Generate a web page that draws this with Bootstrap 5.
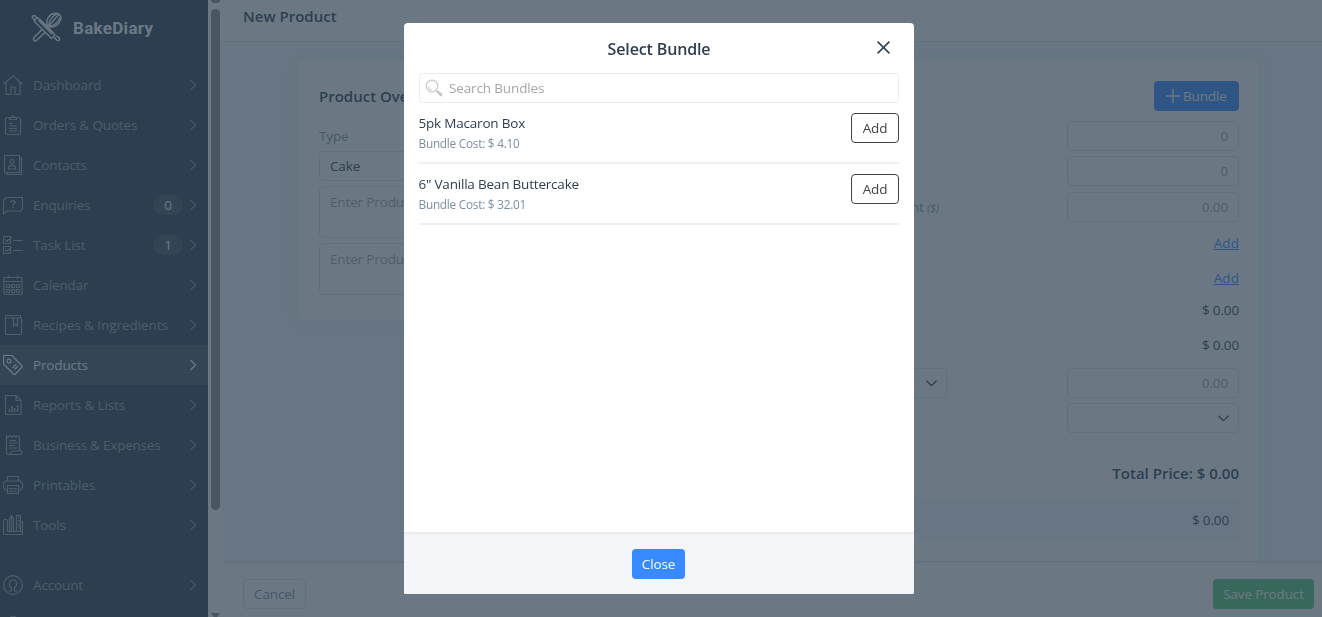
<!DOCTYPE html>
<html lang="en">
<head>
<meta charset="utf-8">
<meta name="viewport" content="width=device-width, initial-scale=1">
<title>BakeDiary – New Product</title>
<link href="https://cdn.jsdelivr.net/npm/bootstrap@5.3.0/dist/css/bootstrap.min.css" rel="stylesheet">
<style>
html,body{height:100%;overflow:hidden}
body{font-family:"Open Sans","Noto Sans",sans-serif;font-size:13.5px;letter-spacing:-.14px;line-height:20px;color:#2c3e50;background:#fff}
svg{fill:none;stroke:currentColor;display:block;flex:none}
.side{width:208px;background:#2c3e50;color:#98a3aa}
.side-link svg:first-child{stroke-width:1.2}
.brand-row{height:65px;padding:12px 0 0 31px;color:#fff;flex:none}
.brand-row span{font:700 17px/32px Roboto,sans-serif;letter-spacing:.3px;margin-left:11px}
.side-link{height:40px;padding:0 11px 0 3px;flex:none}
.side-link>span:nth-child(2){margin-left:10px}
.side-link.on{background:#475764;color:#fff}
.side-link .chev{color:#b8c0c6;margin-left:auto}
.side-link.on .chev{color:#fff}
.count{width:30px;height:20px;border-radius:10px;background:#435463;color:#fff;text-align:center;margin-left:auto}
.count + .chev{margin-left:6px!important}
.track{width:15px;padding:0 3px}
.track i{display:block;width:9px;background:#8e8b8b;flex:none}
.main-area{background:#f5f9fc}
.topbar{height:42px;padding:6px 0 0 20px;background:#fff;border-bottom:1px solid #dde3e8;flex:none}
.strong-t{font-weight:600;font-size:15px;letter-spacing:0}
.canvas{width:960px;margin:19px 0 0 76px;gap:20px}
.panel{background:#fff;border-radius:4px;padding:20px;box-shadow:0 0 22px 12px rgba(44,90,120,.03);flex:1 1 0}
.field{height:30px;border:1px solid #e0e1e3;border-radius:4px;padding:4px 10px;background:#fff}
.field.tall{height:52px;padding-top:5px}
.short{width:172px}
.ph{color:#a6a6a6}
.muted-t{color:#8696a3}
.line{height:30px;display:flex;justify-content:flex-end;align-items:center}
.blue{background:#388aff;color:#fff;border-radius:4px;height:30px}
.line a{color:#388aff;letter-spacing:.1px}
.sumbox{background:#f5f9fc;height:44px;border-radius:4px;padding:12px 10px;text-align:right}
.bottombar{height:56px;background:#fff;border-top:2px solid #dfe5ea;padding:16px 8px 0 20px;flex:none}
.cancel-b{height:30px;width:63px;border:1px solid #dfe1e3;border-radius:4px;text-align:center;line-height:28px;color:#7e92a4}
.save-b{height:30px;width:101px;border-radius:4px;background:#54c778;color:#fff;text-align:center;line-height:30px}
.modal-backdrop.show{background:#2c3e50;opacity:.7}
.modal{overflow:hidden}
.modal-dialog{width:510px;max-width:none;margin:22.5px 0 0 404px}
.modal-content{height:571.5px;border:0;border-radius:4px 4px 2px 2px;overflow:hidden}
.modal-header{height:50px;padding:3px 0 0;border:0}
.modal-title{font-size:16px;font-weight:600;line-height:24px;letter-spacing:-.14px;width:100%;text-align:center}
.x-close{position:absolute;right:24px;top:18px}
.modal-body{padding:0 15px}
.search-f{height:30px;border:1.5px solid #ececec;border-radius:4px;padding-left:5px}
.lens{color:#c9c9c9}
.item{height:61px;border-bottom:2px solid #efefef;padding-top:10px}
.item>div:first-child{margin-left:-.5px;letter-spacing:-.2px}
.item small{font-size:11.8px;letter-spacing:-.24px;display:block;color:#7b8fa1;line-height:20px}
.add-b{width:48px;height:30px;border:1px solid #444;border-radius:4px;text-align:center;line-height:29px;color:#444}
.modal-footer{height:62px;background:#f4f6f9;border-top:2px solid #ebebeb;padding:0 1px 1px 0;border-radius:0}
.close-b{width:53px;text-align:center;line-height:30px;margin:0}
</style>
</head>
<body>
<div class="d-flex vh-100">
  <nav class="side d-flex flex-column flex-shrink-0 overflow-hidden">
    <div class="brand-row d-flex">
      <svg width="31" height="31" viewBox="0 0 31 31" stroke-width="1.4" stroke-linecap="round" stroke-linejoin="round">
        <path d="M6.500 5.500 24 23l-3.500 3.500L3 9z"/><path d="M7.500 8.500l13 13M9.500 8l12.500 12.500"/>
        <path d="M3.500 7.500 1.500 6C.5 4.500 3 2.500 4.300 4l1.500 2M23.500 25.500l2 2.500c1.500 1.500 4-.5 2.800-2.200L25.500 24"/>
        <path d="M16.500 13.500c-2-5 1-11 6.500-12 5-1 8 2 6.500 6.500-1.500 5-6.500 7.500-11 7M17.500 13.500C18 8 22 3 26 2M18 14c5 0 9-4 11-8M18 13.500l9-10"/>
        <path d="M11 17.500 3 25.500c-1.500 2 .5 4.500 2.500 3l8.500-8"/>
      </svg><span>BakeDiary</span>
    </div>
    <div class="side-link d-flex align-items-center"><svg width="20" height="20" viewBox="0 0 20 20"><path d="M.5 9 10 .8 19.500 9M3 7v12.300h5V12h4v7.300h5V7"/></svg><span>Dashboard</span><svg class="chev" width="8" height="12" viewBox="0 0 8 12"><path d="M1.500 1l5 5-5 5"/></svg></div>
    <div class="side-link d-flex align-items-center"><svg width="20" height="20" viewBox="0 0 20 20"><rect x="2.500" y="2.500" width="15" height="17" rx="2"/><path d="M6.500 4.500v-2h2a1.500 1.500 0 0 1 3 0h2v2zM6 8.500h4M6 11h8M6 13.500h8M6 16h8"/></svg><span>Orders &amp; Quotes</span><svg class="chev" width="8" height="12" viewBox="0 0 8 12"><path d="M1.500 1l5 5-5 5"/></svg></div>
    <div class="side-link d-flex align-items-center"><svg width="20" height="20" viewBox="0 0 20 20"><path d="M1.500.5h15v17h-15zM4 17.500v2h14.500V3h-2"/><circle cx="9" cy="6.500" r="2"/><path d="M5.500 14v-1c0-3.500 7-3.500 7 0v1z"/></svg><span>Contacts</span><svg class="chev" width="8" height="12" viewBox="0 0 8 12"><path d="M1.500 1l5 5-5 5"/></svg></div>
    <div class="side-link d-flex align-items-center"><svg width="20" height="20" viewBox="0 0 20 20"><path d="M3 2.500h16.500v11.500l-2 2H4L.5 19V5z"/><path d="M8 7.500c0-2.500 4-2.500 4 0 0 1.500-2 1.500-2 3M10 11.500v1.500" stroke-width="1.500"/></svg><span>Enquiries</span><span class="count">0</span><svg class="chev" width="8" height="12" viewBox="0 0 8 12"><path d="M1.500 1l5 5-5 5"/></svg></div>
    <div class="side-link d-flex align-items-center"><svg width="20" height="20" viewBox="0 0 20 20"><path d="M.5 1.500h7v7h-7zM.5 11.500h7v7h-7zM10 5.500h10M10 15.500h10M2 4.500l2 2 4.500-4.500M2 14.500l2 2 4.500-4.500"/></svg><span>Task List</span><span class="count">1</span><svg class="chev" width="8" height="12" viewBox="0 0 8 12"><path d="M1.500 1l5 5-5 5"/></svg></div>
    <div class="side-link d-flex align-items-center"><svg width="20" height="20" viewBox="0 0 20 20"><rect x="1" y="2.500" width="18" height="17" rx="1"/><path d="M1 6.500h18M5.500.5v3M14.500.5v3M3.500 9.500h3v3h-3zM8.500 9.500h3v3h-3zM13.500 9.500h3v3h-3zM3.500 14.500h3v3h-3zM8.500 14.500h3v3h-3zM13.500 14.500h3v3h-3z"/></svg><span>Calendar</span><svg class="chev" width="8" height="12" viewBox="0 0 8 12"><path d="M1.500 1l5 5-5 5"/></svg></div>
    <div class="side-link d-flex align-items-center"><svg width="20" height="20" viewBox="0 0 20 20"><path d="M18.500 3v16.500H4a1.500 1.500 0 0 1-1.500-1.500V2A1.500 1.500 0 0 1 4 .5h13.500v2.500H4M10.500 3v8l2-2 2 2V3"/></svg><span style="letter-spacing:-.06px">Recipes &amp; Ingredients</span><svg class="chev" width="8" height="12" viewBox="0 0 8 12"><path d="M1.500 1l5 5-5 5"/></svg></div>
    <div class="side-link on d-flex align-items-center"><svg width="20" height="20" viewBox="0 0 20 20"><path d="M.5.5h8.500L19.500 11.500 12 19.500h-1L.5 9z" stroke-linejoin="round"/><circle cx="6" cy="6" r="1.900"/><path d="M9.500 13l3.500-3.500M11.500 14.500l3.500-3.500"/></svg><span>Products</span><svg class="chev" width="8" height="12" viewBox="0 0 8 12"><path d="M1.500 1l5 5-5 5" stroke-width="1.300"/></svg></div>
    <div class="side-link d-flex align-items-center"><svg width="20" height="20" viewBox="0 0 20 20"><path d="M2.500.5h10.500l5 5v14H2.500zM13 .5v5h5"/><path d="M6.500 17v-3M9 17v-6M11.500 17v-4M14.500 17v-7" stroke-width="1.600"/></svg><span>Reports &amp; Lists</span><svg class="chev" width="8" height="12" viewBox="0 0 8 12"><path d="M1.500 1l5 5-5 5"/></svg></div>
    <div class="side-link d-flex align-items-center"><svg width="20" height="20" viewBox="0 0 20 20"><path d="M16.500 16V1.500l-1.500-1-2 1.500-2-1.500L9 2 7 .5 5 2 3.500 1v16.500c0 1 .5 2 2 2h11c3 0 3-3 2-3.500H9c-1 0-.5 3.500-3 3.500M6 5.500h7M6 8h8M6 10.500h6M6 13h8"/></svg><span style="letter-spacing:-.22px">Business &amp; Expenses</span><svg class="chev" width="8" height="12" viewBox="0 0 8 12"><path d="M1.500 1l5 5-5 5"/></svg></div>
    <div class="side-link d-flex align-items-center"><svg width="20" height="20" viewBox="0 0 20 20"><path d="M4.500 6V1.500h11V6M4.500 15h-2l-2-2V8l2-2h15l2 2v5l-2 2h-2M4.500 10.500h11v8h-11zM6 13.500h8M6 16h8"/></svg><span>Printables</span><svg class="chev" width="8" height="12" viewBox="0 0 8 12"><path d="M1.500 1l5 5-5 5"/></svg></div>
    <div class="side-link d-flex align-items-center"><svg width="20" height="20" viewBox="0 0 20 20"><path d="M.5 19.500V6l1-1.500h2L4.500 6v10.500h15v3H.5M6.500 16.500V4L8.500.5l2 3.500v12.500M8.500 1v15M13.500 16.500V.5h4v16M15 3h2.500M15 5.500h2.500M15 8h2.500M15 10.500h2.500M15 13h2.500M17.500 6.500h2v11"/></svg><span>Tools</span><svg class="chev" width="8" height="12" viewBox="0 0 8 12"><path d="M1.500 1l5 5-5 5"/></svg></div>
    <div class="side-link d-flex align-items-center" style="margin-top:20px"><svg width="20" height="20" viewBox="0 0 20 20"><circle cx="10" cy="10" r="9.300"/><path d="M5.500 16H8.500v-3C5 10 6 5 10 5s5 5 1.500 8v3h3"/></svg><span>Account</span><svg class="chev" width="8" height="12" viewBox="0 0 8 12"><path d="M1.500 1l5 5-5 5"/></svg></div>
    <div class="side-link d-flex align-items-center"><svg width="20" height="20" viewBox="0 0 20 20"><circle cx="10" cy="4" r="3"/></svg></div>
  </nav>
  <div class="track d-flex flex-column">
    <i style="height:3px;border-radius:0 0 3px 3px"></i><i style="height:501px;border-radius:5px;margin-top:6px"></i>
    <i style="height:4px;margin-top:auto;clip-path:polygon(0 0,100% 0,70% 100%,30% 100%)"></i>
  </div>
  <main class="main-area d-flex flex-column flex-grow-1">
    <header class="topbar strong-t">New Product</header>
    <div class="flex-grow-1 overflow-hidden">
      <div class="canvas d-flex align-items-start">
        <section class="panel" style="height:259px">
          <div class="strong-t" style="margin:5px 0 20px">Product Overview</div>
          <div class="muted-t" style="margin-bottom:5px">Type</div>
          <div class="field" style="margin-bottom:5px">Cake</div>
          <div class="field tall ph" style="margin-bottom:5px">Enter Product Name</div>
          <div class="field tall ph">Enter Product Description</div>
        </section>
        <section class="panel" style="height:520px">
          <div class="d-flex justify-content-end mb-2 pb-0"><div class="blue d-flex align-items-center" style="padding:0 12px 0 11px;width:85px"><svg width="16" height="16" viewBox="0 0 16 16" stroke-width="1.500"><path d="M8 1v14M1 8h14"/></svg><span style="margin-left:2px">Bundle</span></div></div>
          <div class="d-flex flex-column align-items-end" style="gap:5px;margin-top:10px">
            <div class="field short ph text-end">0</div>
            <div class="field short ph text-end">0</div>
            <div class="d-flex w-100 align-items-center" style="margin-top:1px"><span class="muted-t ms-auto text-nowrap" style="margin-right:128px">Discount <i style="font-size:11px">($)</i></span><div class="field short ph text-end flex-shrink-0">0.00</div></div>
            <div class="line" style="margin-top:1px">&#8203;<a href="#">Add</a></div>
            <div class="line"><a href="#">Add</a></div>
            <div class="line" style="margin-top:-3px">$ 0.00</div>
            <div class="line">$ 0.00</div>
            <div class="d-flex w-100 justify-content-between" style="margin-top:3px"><div class="field d-flex align-items-center justify-content-end" style="width:138px;padding-right:9px"><svg width="11" height="7" viewBox="0 0 11 7" stroke-width="1.300"><path d="M.5.700l5 5 5-5"/></svg></div><div class="field short ph text-end">0.00</div></div>
            <div class="field short d-flex align-items-center justify-content-end" style="padding-right:9px"><svg width="11" height="7" viewBox="0 0 11 7" stroke-width="1.300"><path d="M.5.700l5 5 5-5"/></svg></div>
          </div>
          <div class="strong-t text-end" style="margin:30px 0 15px">Total Price: $ 0.00</div>
          <div class="sumbox">$ 0.00</div>
        </section>
      </div>
    </div>
    <footer class="bottombar d-flex justify-content-between"><div class="cancel-b">Cancel</div><div class="save-b">Save Product</div></footer>
  </main>
</div>

<div class="modal-backdrop show"></div>
<div class="modal d-block" tabindex="-1" role="dialog">
  <div class="modal-dialog"><div class="modal-content">
    <div class="modal-header"><h1 class="modal-title m-0">Select Bundle</h1>
      <svg class="x-close" width="13" height="13" viewBox="0 0 13 13" stroke-width="1.500"><path d="M.6.6l11.800 11.800M12.400.6.6 12.400"/></svg></div>
    <div class="modal-body">
      <div class="search-f d-flex align-items-center ph"><svg class="lens" width="18" height="18" viewBox="0 0 18 18"><circle cx="7" cy="7" r="5.800" stroke-width="1.300"/><path d="M3.500 7.500A3.500 3.500 0 0 0 7 11" stroke-width="1"/><path d="M11.300 11.300l1.500 1.500" stroke-width="1.500"/><path d="M13 13l3 2.800" stroke-width="3" stroke-linecap="round"/></svg><span style="margin-left:6px">Search Bundles</span></div>
      <div class="item d-flex justify-content-between"><div>5pk Macaron Box<small>Bundle Cost: $ 4.10</small></div><div class="add-b">Add</div></div>
      <div class="item d-flex justify-content-between"><div>6" Vanilla Bean Buttercake<small>Bundle Cost: $ 32.01</small></div><div class="add-b">Add</div></div>
    </div>
    <div class="modal-footer d-flex justify-content-center"><div class="blue close-b">Close</div></div>
  </div></div>
</div>
<script src="https://cdn.jsdelivr.net/npm/bootstrap@5.3.0/dist/js/bootstrap.bundle.min.js"></script>
</body>
</html>
